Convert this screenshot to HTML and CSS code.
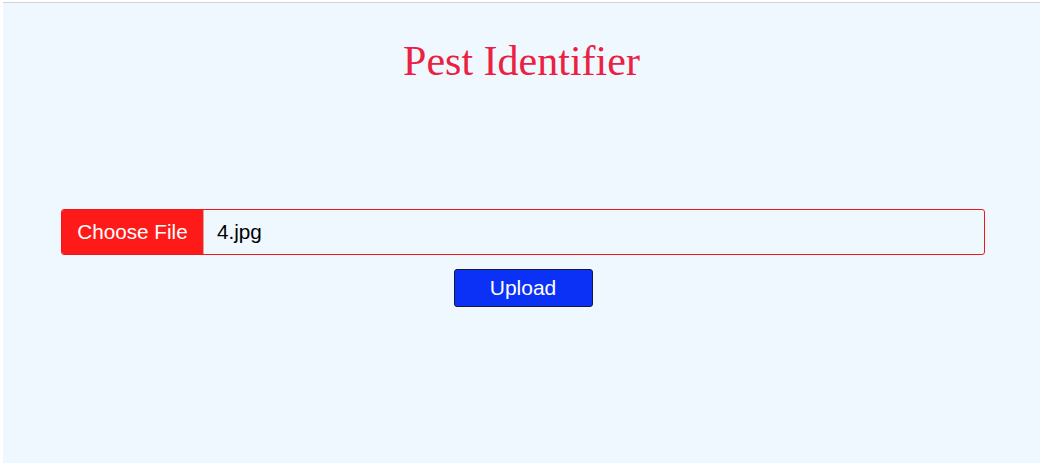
FILE: index.html
```html
<!DOCTYPE html>
<html lang="en">
<head>
<meta charset="utf-8">
<title>Pest Identifier</title>
<link rel="stylesheet" href="styles.css">
</head>
<body>
<main class="page">
  <h1 class="title">Pest Identifier</h1>
  <form class="upload-form">
    <div class="file-field">
      <span class="file-button">Choose File</span>
      <span class="file-name">4.jpg</span>
    </div>
    <button type="button" class="upload-button">Upload</button>
  </form>
</main>
</body>
</html>
```
FILE: styles.css
```css
html, body {
  margin: 0;
  padding: 0;
  background: #ffffff;
}

.page {
  margin: 2px 0 0 3px;
  height: 461px;
  box-sizing: border-box;
  border-top: 1px solid #cdd2d8;
  background: #f0f8ff;
  display: flex;
  flex-direction: column;
  align-items: center;
}

.title {
  margin: 34px 0 0 0;
  font-family: "Liberation Serif", "Times New Roman", serif;
  font-weight: normal;
  font-size: 42px;
  line-height: 48px;
  color: #ea2140;
}

.upload-form {
  margin-top: 124px;
  width: 100%;
  box-sizing: border-box;
  padding: 0 55px 0 58px;
  display: flex;
  flex-direction: column;
  align-items: center;
  gap: 14px;
}

.file-field {
  width: 100%;
  height: 46px;
  box-sizing: border-box;
  border: 1px solid #f01818;
  border-radius: 3px;
  display: flex;
  align-items: stretch;
  font-family: "Liberation Sans", Arial, sans-serif;
  font-size: 20.7px;
  overflow: hidden;
}

.file-button {
  width: 141px;
  background: #ff1a1a;
  color: #ffffff;
  display: flex;
  align-items: center;
  justify-content: center;
  border-right: 1px solid #e0a0a0;
}

.file-name {
  padding-left: 13px;
  display: flex;
  align-items: center;
  color: #000000;
}

.upload-button {
  width: 139px;
  height: 38px;
  background: #0b31f6;
  color: #ffffff;
  border: 1px solid #15183a;
  border-radius: 3px;
  font-family: "Liberation Sans", Arial, sans-serif;
  font-size: 21px;
  padding: 0;
  cursor: pointer;
}
```
